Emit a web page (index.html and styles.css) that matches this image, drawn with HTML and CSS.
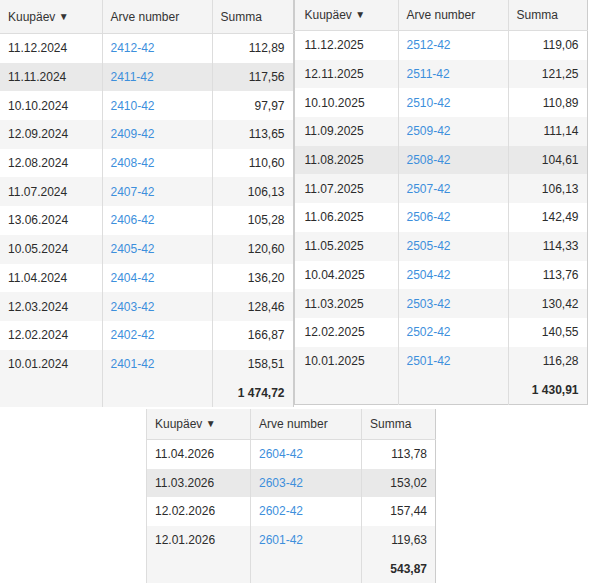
FILE: index.html
```html
<!DOCTYPE html>
<html lang="et">
<head>
    <meta charset="UTF-8">
    <meta name="viewport" content="width=device-width, initial-scale=1.0">
    <title>Arved</title>
    <link rel="stylesheet" href="styles.css">
</head>
<body>
    <div class="top">
        <table class="grid g1">
            <colgroup><col class="c1"><col class="c2"><col class="c3"></colgroup>
            <thead>
                <tr><th>Kuupäev <span class="sort">&#9660;</span></th><th>Arve number</th><th>Summa</th></tr>
            </thead>
            <tbody>
                <tr><td>11.12.2024</td><td><a href="#">2412-42</a></td><td class="num">112,89</td></tr>
                <tr class="hover"><td>11.11.2024</td><td><a href="#">2411-42</a></td><td class="num">117,56</td></tr>
                <tr><td>10.10.2024</td><td><a href="#">2410-42</a></td><td class="num">97,97</td></tr>
                <tr><td>12.09.2024</td><td><a href="#">2409-42</a></td><td class="num">113,65</td></tr>
                <tr><td>12.08.2024</td><td><a href="#">2408-42</a></td><td class="num">110,60</td></tr>
                <tr><td>11.07.2024</td><td><a href="#">2407-42</a></td><td class="num">106,13</td></tr>
                <tr><td>13.06.2024</td><td><a href="#">2406-42</a></td><td class="num">105,28</td></tr>
                <tr><td>10.05.2024</td><td><a href="#">2405-42</a></td><td class="num">120,60</td></tr>
                <tr><td>11.04.2024</td><td><a href="#">2404-42</a></td><td class="num">136,20</td></tr>
                <tr><td>12.03.2024</td><td><a href="#">2403-42</a></td><td class="num">128,46</td></tr>
                <tr><td>12.02.2024</td><td><a href="#">2402-42</a></td><td class="num">166,87</td></tr>
                <tr><td>10.01.2024</td><td><a href="#">2401-42</a></td><td class="num">158,51</td></tr>
            </tbody>
            <tfoot>
                <tr><td></td><td></td><td class="num">1 474,72</td></tr>
            </tfoot>
        </table>

        <table class="grid g2">
            <colgroup><col class="c1"><col class="c2"><col class="c3"></colgroup>
            <thead>
                <tr><th>Kuupäev <span class="sort">&#9660;</span></th><th>Arve number</th><th>Summa</th></tr>
            </thead>
            <tbody>
                <tr><td>11.12.2025</td><td><a href="#">2512-42</a></td><td class="num">119,06</td></tr>
                <tr><td>12.11.2025</td><td><a href="#">2511-42</a></td><td class="num">121,25</td></tr>
                <tr><td>10.10.2025</td><td><a href="#">2510-42</a></td><td class="num">110,89</td></tr>
                <tr><td>11.09.2025</td><td><a href="#">2509-42</a></td><td class="num">111,14</td></tr>
                <tr class="hover"><td>11.08.2025</td><td><a href="#">2508-42</a></td><td class="num">104,61</td></tr>
                <tr><td>11.07.2025</td><td><a href="#">2507-42</a></td><td class="num">106,13</td></tr>
                <tr><td>11.06.2025</td><td><a href="#">2506-42</a></td><td class="num">142,49</td></tr>
                <tr><td>11.05.2025</td><td><a href="#">2505-42</a></td><td class="num">114,33</td></tr>
                <tr><td>10.04.2025</td><td><a href="#">2504-42</a></td><td class="num">113,76</td></tr>
                <tr><td>11.03.2025</td><td><a href="#">2503-42</a></td><td class="num">130,42</td></tr>
                <tr><td>12.02.2025</td><td><a href="#">2502-42</a></td><td class="num">140,55</td></tr>
                <tr><td>10.01.2025</td><td><a href="#">2501-42</a></td><td class="num">116,28</td></tr>
            </tbody>
            <tfoot>
                <tr><td></td><td></td><td class="num">1 430,91</td></tr>
            </tfoot>
        </table>
    </div>

    <div class="bottom">
        <table class="grid g3">
            <colgroup><col class="c1"><col class="c2"><col class="c3"></colgroup>
            <thead>
                <tr><th>Kuupäev <span class="sort">&#9660;</span></th><th>Arve number</th><th>Summa</th></tr>
            </thead>
            <tbody>
                <tr><td>11.04.2026</td><td><a href="#">2604-42</a></td><td class="num">113,78</td></tr>
                <tr class="hover"><td>11.03.2026</td><td><a href="#">2603-42</a></td><td class="num">153,02</td></tr>
                <tr><td>12.02.2026</td><td><a href="#">2602-42</a></td><td class="num">157,44</td></tr>
                <tr><td>12.01.2026</td><td><a href="#">2601-42</a></td><td class="num">119,63</td></tr>
            </tbody>
            <tfoot>
                <tr><td></td><td></td><td class="num">543,87</td></tr>
            </tfoot>
        </table>
    </div>
</body>
</html>
```

FILE: styles.css
```css
body {
    font-family: "Liberation Sans", Arial, sans-serif;
    font-size: 12px;
    color: #2b2b2b;
    background: #fff;
    margin: 0;
    padding: 0;
}
.top {
    display: flex;
    align-items: flex-start;
}
.bottom {
    padding-left: 146px;
    padding-top: 2px;
}
.grid {
    border-collapse: collapse;
    table-layout: fixed;
    background: #fff;
}
.grid th {
    background: #f4f4f4;
    font-weight: normal;
    text-align: left;
    color: #333;
    border-bottom: 1px solid #ddd;
}
.grid th, .grid td {
    padding: 0 8px;
    border-right: 1px solid #ddd;
    white-space: nowrap;
    overflow: hidden;
}
.grid th:last-child, .grid td:last-child {
    border-right: 1px solid #ccc;
}
.grid td {
    height: 28.7px;
    vertical-align: middle;
}
.grid tbody tr:nth-child(even) td {
    background: #f5f5f5;
}
.grid tbody tr.hover td {
    background: #e9e9e9;
}
.grid tfoot td {
    background: #f5f5f5;
    font-weight: bold;
}
.grid .num {
    text-align: right;
}
.grid a {
    color: #3d8fdc;
    text-decoration: none;
}
.sort {
    font-size: 10px;
    position: relative;
    top: -1px;
}

/* first table: cut at the left edge */
.g1 {
    width: 293px;
}
.g1 th {
    height: 33px;
}
.g1 .c1 { width: 102px; }
.g1 .c2 { width: 110px; }
.g1 .c3 { width: 81px; }

/* second table */
.g2 {
    width: 293px;
    border-left: 1px solid #ccc;
    border-bottom: 1px solid #ccc;
}
.g2 th {
    height: 30px;
}
.g2 th:first-child, .g2 td:first-child {
    padding-left: 10px;
}
.g2 .c1 { width: 104px; }
.g2 .c2 { width: 110px; }
.g2 .c3 { width: 79px; }

/* third table */
.g3 {
    width: 289px;
    border-left: 1px solid #ddd;
}
.g3 th {
    height: 30px;
}
.g3 td {
    height: 28.6px;
}
.g3 .c1 { width: 104px; }
.g3 .c2 { width: 111px; }
.g3 .c3 { width: 74px; }
```
